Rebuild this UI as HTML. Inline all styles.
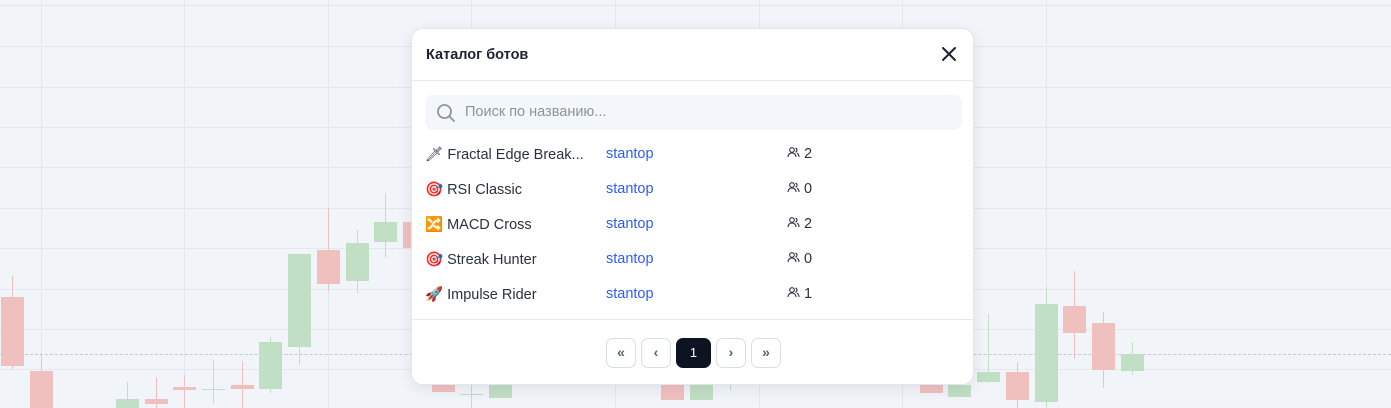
<!DOCTYPE html>
<html><head><meta charset="utf-8"><style>
*{box-sizing:border-box;margin:0;padding:0}
body{width:1391px;height:408px;overflow:hidden;background:#f1f4f9;font-family:"Liberation Sans",sans-serif;position:relative}
.h{position:absolute;left:0;width:1391px;height:1px;background:#e3e7ee}
.v{position:absolute;top:0;height:408px;width:1px;background:#e3e7ee}
.c{position:absolute}
.r{background:#f0c0bf}.g{background:#c1dfc5}
.modal{position:absolute;left:411px;top:28px;width:563px;height:357px;background:#fff;border-radius:12px;border:1px solid #e2e6ee;box-shadow:0 4px 16px rgba(0,0,0,.08)}
.title{position:absolute;left:14px;top:18px;font-size:14.5px;font-weight:bold;color:#1b2230}
.close{position:absolute;right:16px;top:17px}
.hdr{position:absolute;left:0;right:0;top:51px;height:1px;background:#e5e9f0}
.search{position:absolute;left:13px;top:66px;width:537px;height:35px;background:#f3f6fa;border-radius:8px}
.search span{position:absolute;left:40px;top:9px;font-size:14.5px;color:#8a94a6}
.row{position:absolute;left:13px;height:20px;font-size:14.5px;color:#2a3140}
.row .n{position:absolute;left:0;white-space:nowrap}
.row .a{position:absolute;left:181px;color:#2f5cf5}
.row .u{position:absolute;left:362px;white-space:nowrap}
.ftr{position:absolute;left:0;right:0;top:290px;height:1px;background:#e5e9f0}
.pb{position:absolute;top:309px;width:30px;height:30px;border:1px solid #d8dee8;border-radius:7px;background:#fff;color:#555f70;text-align:center;line-height:27px;font-size:14px;font-weight:bold}
.pb.act{background:#0d1320;border-color:#0d1320;color:#fff;width:35px;font-weight:normal;font-size:13px}
</style></head><body>
<div class="h" style="top:5px"></div><div class="h" style="top:46px"></div><div class="h" style="top:87px"></div><div class="h" style="top:127px"></div><div class="h" style="top:167px"></div><div class="h" style="top:208px"></div><div class="h" style="top:248px"></div><div class="h" style="top:289px"></div><div class="h" style="top:329px"></div><div class="h" style="top:369px"></div>
<div class="v" style="left:41px"></div><div class="v" style="left:184px"></div><div class="v" style="left:328px"></div><div class="v" style="left:471px"></div><div class="v" style="left:615px"></div><div class="v" style="left:759px"></div><div class="v" style="left:902px"></div><div class="v" style="left:1046px"></div>
<div style="position:absolute;left:0;top:354px;width:1391px;border-top:1px dashed #c3c7cf"></div>
<div class="c r" style="left:12px;top:276px;width:1px;height:93px"></div><div class="c r" style="left:1px;top:297px;width:23px;height:69px"></div>
<div class="c r" style="left:41px;top:353px;width:1px;height:55px"></div><div class="c r" style="left:30px;top:371px;width:23px;height:37px"></div>
<div class="c g" style="left:127px;top:382px;width:1px;height:26px"></div><div class="c g" style="left:116px;top:399px;width:23px;height:9px"></div>
<div class="c r" style="left:156px;top:377px;width:1px;height:31px"></div><div class="c r" style="left:145px;top:399px;width:23px;height:5px"></div>
<div class="c r" style="left:184px;top:375px;width:1px;height:33px"></div><div class="c r" style="left:173px;top:387px;width:23px;height:3px"></div>
<div class="c g" style="left:213px;top:360px;width:1px;height:44px"></div><div class="c g" style="left:202px;top:389px;width:23px;height:1px"></div>
<div class="c r" style="left:242px;top:361px;width:1px;height:47px"></div><div class="c r" style="left:231px;top:385px;width:23px;height:4px"></div>
<div class="c g" style="left:270px;top:337px;width:1px;height:56px"></div><div class="c g" style="left:259px;top:342px;width:23px;height:47px"></div>
<div class="c g" style="left:299px;top:254px;width:1px;height:111px"></div><div class="c g" style="left:288px;top:254px;width:23px;height:93px"></div>
<div class="c r" style="left:328px;top:208px;width:1px;height:83px"></div><div class="c r" style="left:317px;top:250px;width:23px;height:34px"></div>
<div class="c g" style="left:357px;top:230px;width:1px;height:63px"></div><div class="c g" style="left:346px;top:243px;width:23px;height:38px"></div>
<div class="c g" style="left:385px;top:193px;width:1px;height:65px"></div><div class="c g" style="left:374px;top:222px;width:23px;height:20px"></div>
<div class="c r" style="left:403px;top:222px;width:23px;height:26px"></div>
<div class="c r" style="left:432px;top:385px;width:23px;height:7px"></div>
<div class="c g" style="left:471px;top:385px;width:1px;height:23px"></div><div class="c g" style="left:460px;top:394px;width:23px;height:1px"></div>
<div class="c g" style="left:489px;top:385px;width:23px;height:13px"></div>
<div class="c r" style="left:661px;top:385px;width:23px;height:15px"></div>
<div class="c g" style="left:690px;top:385px;width:23px;height:15px"></div>
<div class="c g" style="left:730px;top:385px;width:1px;height:5px"></div>
<div class="c r" style="left:920px;top:385px;width:23px;height:8px"></div>
<div class="c g" style="left:948px;top:385px;width:23px;height:12px"></div>
<div class="c g" style="left:988px;top:314px;width:1px;height:69px"></div><div class="c g" style="left:977px;top:372px;width:23px;height:10px"></div>
<div class="c r" style="left:1017px;top:362px;width:1px;height:46px"></div><div class="c r" style="left:1006px;top:372px;width:23px;height:28px"></div>
<div class="c g" style="left:1046px;top:287px;width:1px;height:121px"></div><div class="c g" style="left:1035px;top:304px;width:23px;height:98px"></div>
<div class="c r" style="left:1074px;top:271px;width:1px;height:88px"></div><div class="c r" style="left:1063px;top:306px;width:23px;height:27px"></div>
<div class="c r" style="left:1103px;top:312px;width:1px;height:76px"></div><div class="c r" style="left:1092px;top:323px;width:23px;height:47px"></div>
<div class="c g" style="left:1132px;top:342px;width:1px;height:33px"></div><div class="c g" style="left:1121px;top:354px;width:23px;height:17px"></div>

<div class="modal">
<div class="title">Каталог ботов</div>
<svg class="close" width="16" height="16" viewBox="0 0 16 16"><path d="M2 2L14 14M14 2L2 14" stroke="#1b2230" stroke-width="2" stroke-linecap="round"/></svg>
<div class="hdr"></div>
<div class="search"><svg style="position:absolute;left:11px;top:8px" width="20" height="20" viewBox="0 0 20 20"><circle cx="8.5" cy="8.5" r="6.5" fill="none" stroke="#8a94a6" stroke-width="1.8"/><path d="M13.3 13.3L18 18" stroke="#8a94a6" stroke-width="1.8" stroke-linecap="round"/></svg><span>Поиск по названию...</span></div>
<div class="row" style="top:117px"><span class="n">🗡 Fractal Edge Break...</span><span class="a">stantop</span><span class="u"><svg width="13" height="12" viewBox="0 0 13 12"><circle cx="5" cy="4" r="2.3" fill="none" stroke="#2a3140" stroke-width="1.1"/><path d="M1 11c0-2.5 1.8-4 4-4s4 1.5 4 4M8.5 2a2.3 2.3 0 010 4.3M10 7.3c1.2.5 2 1.8 2 3.7" fill="none" stroke="#2a3140" stroke-width="1.1"/></svg> 2</span></div>
<div class="row" style="top:152px"><span class="n">🎯 RSI Classic</span><span class="a">stantop</span><span class="u"><svg width="13" height="12" viewBox="0 0 13 12"><circle cx="5" cy="4" r="2.3" fill="none" stroke="#2a3140" stroke-width="1.1"/><path d="M1 11c0-2.5 1.8-4 4-4s4 1.5 4 4M8.5 2a2.3 2.3 0 010 4.3M10 7.3c1.2.5 2 1.8 2 3.7" fill="none" stroke="#2a3140" stroke-width="1.1"/></svg> 0</span></div>
<div class="row" style="top:187px"><span class="n">🔀 MACD Cross</span><span class="a">stantop</span><span class="u"><svg width="13" height="12" viewBox="0 0 13 12"><circle cx="5" cy="4" r="2.3" fill="none" stroke="#2a3140" stroke-width="1.1"/><path d="M1 11c0-2.5 1.8-4 4-4s4 1.5 4 4M8.5 2a2.3 2.3 0 010 4.3M10 7.3c1.2.5 2 1.8 2 3.7" fill="none" stroke="#2a3140" stroke-width="1.1"/></svg> 2</span></div>
<div class="row" style="top:222px"><span class="n">🎯 Streak Hunter</span><span class="a">stantop</span><span class="u"><svg width="13" height="12" viewBox="0 0 13 12"><circle cx="5" cy="4" r="2.3" fill="none" stroke="#2a3140" stroke-width="1.1"/><path d="M1 11c0-2.5 1.8-4 4-4s4 1.5 4 4M8.5 2a2.3 2.3 0 010 4.3M10 7.3c1.2.5 2 1.8 2 3.7" fill="none" stroke="#2a3140" stroke-width="1.1"/></svg> 0</span></div>
<div class="row" style="top:257px"><span class="n">🚀 Impulse Rider</span><span class="a">stantop</span><span class="u"><svg width="13" height="12" viewBox="0 0 13 12"><circle cx="5" cy="4" r="2.3" fill="none" stroke="#2a3140" stroke-width="1.1"/><path d="M1 11c0-2.5 1.8-4 4-4s4 1.5 4 4M8.5 2a2.3 2.3 0 010 4.3M10 7.3c1.2.5 2 1.8 2 3.7" fill="none" stroke="#2a3140" stroke-width="1.1"/></svg> 1</span></div>
<div class="ftr"></div>
<div class="pb" style="left:194px">«</div>
<div class="pb" style="left:229px">‹</div>
<div class="pb act" style="left:264px">1</div>
<div class="pb" style="left:304px">›</div>
<div class="pb" style="left:339px">»</div>
</div>
</body></html>
